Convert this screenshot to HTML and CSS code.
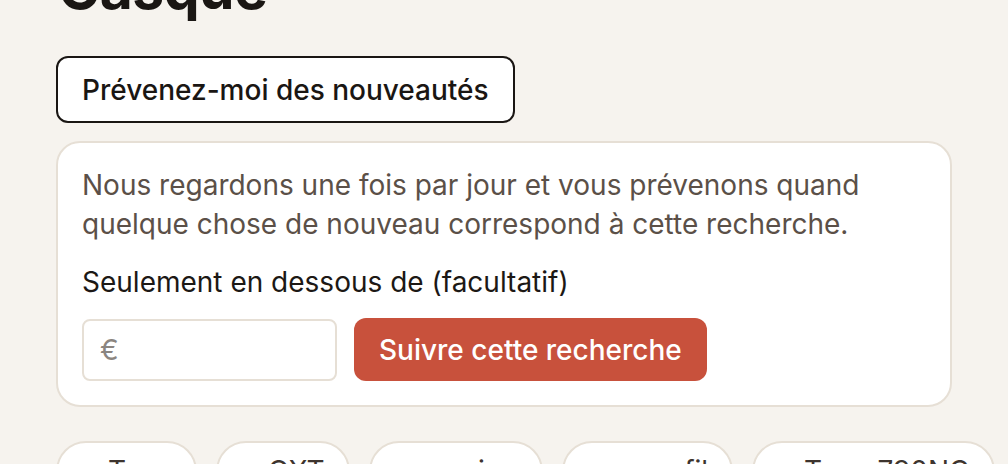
FILE: index.html
```html
<!DOCTYPE html>
<html lang="fr">
<head>
<meta charset="utf-8">
<title>Casque</title>
<link rel="stylesheet" href="styles.css">
</head>
<body>
<main class="page">
  <h1 class="title">Casque</h1>
  <button class="notify-btn" type="button">Prévenez-moi des nouveautés</button>
  <section class="card">
    <p class="card-text">Nous regardons une fois par jour et vous prévenons quand quelque chose de nouveau correspond à cette recherche.</p>
    <label class="card-label" for="price">Seulement en dessous de (facultatif)</label>
    <div class="card-row">
      <input class="price-input" id="price" type="text" placeholder="€">
      <button class="follow-btn" type="button">Suivre cette recherche</button>
    </div>
  </section>
  <nav class="chips">
    <a class="chip"><svg class="chip-icon" viewBox="0 0 24 24" width="14" height="14"><circle cx="10.5" cy="10.5" r="6.5" fill="none" stroke="currentColor" stroke-width="2.5"/><path d="M15.5 15.5 21 21" stroke="currentColor" stroke-width="2.5" stroke-linecap="round"/></svg><span>Tous</span></a>
    <a class="chip"><svg class="chip-icon" viewBox="0 0 24 24" width="14" height="14"><circle cx="10.5" cy="10.5" r="6.5" fill="none" stroke="currentColor" stroke-width="2.5"/><path d="M15.5 15.5 21 21" stroke="currentColor" stroke-width="2.5" stroke-linecap="round"/></svg><span>OXT</span></a>
    <a class="chip"><svg class="chip-icon" viewBox="0 0 24 24" width="14" height="14"><circle cx="10.5" cy="10.5" r="6.5" fill="none" stroke="currentColor" stroke-width="2.5"/><path d="M15.5 15.5 21 21" stroke="currentColor" stroke-width="2.5" stroke-linecap="round"/></svg><span>gaming</span></a>
    <a class="chip"><svg class="chip-icon" viewBox="0 0 24 24" width="14" height="14"><circle cx="10.5" cy="10.5" r="6.5" fill="none" stroke="currentColor" stroke-width="2.5"/><path d="M15.5 15.5 21 21" stroke="currentColor" stroke-width="2.5" stroke-linecap="round"/></svg><span>sans fil</span></a>
    <a class="chip"><svg class="chip-icon" viewBox="0 0 24 24" width="14" height="14"><circle cx="10.5" cy="10.5" r="6.5" fill="none" stroke="currentColor" stroke-width="2.5"/><path d="M15.5 15.5 21 21" stroke="currentColor" stroke-width="2.5" stroke-linecap="round"/></svg><span>Tune 790NC</span></a>
  </nav>
</main>
</body>
</html>
```

FILE: styles.css
```css
* { box-sizing: border-box; }
html, body { margin: 0; padding: 0; }
body {
  background: #f6f3ee;
  font-family: Inter, "Noto Sans", "Liberation Sans", sans-serif;
  color: #1c1815;
  overflow: hidden;
}
.page {
  padding: 0 56px;
  display: flex;
  flex-direction: column;
  align-items: flex-start;
}
.title {
  margin: -43px 0 0 2px;
  font-size: 57px;
  line-height: 64px;
  font-weight: 700;
  letter-spacing: -0.5px;
  color: #1a1613;
}
.notify-btn {
  margin-top: 35px;
  font: inherit;
  font-size: 28px;
  font-weight: 500;
  line-height: 36px;
  padding: 13.5px 24px;
  background: #fff;
  color: #1a1613;
  border: 2px solid #1a1613;
  border-radius: 12px;
}
.card {
  margin-top: 18px;
  align-self: stretch;
  background: #fff;
  border: 2px solid #e6dfd5;
  border-radius: 24px;
  padding: 23px 24px 24px 24px;
  display: flex;
  flex-direction: column;
  align-items: flex-start;
}
.card-text {
  margin: 0;
  font-size: 28px;
  line-height: 39px;
  color: #5b5048;
}
.card-label {
  margin-top: 19px;
  font-size: 28px;
  line-height: 39px;
  color: #1c1815;
}
.card-row {
  margin-top: 16px;
  display: flex;
  align-items: flex-end;
  gap: 17px;
}
.price-input {
  width: 255px;
  height: 62px;
  border: 2px solid #e6dfd5;
  border-radius: 8px;
  padding: 0 16px;
  font: inherit;
  font-size: 28px;
  color: #1c1815;
  background: #fff;
  outline: none;
}
.price-input::placeholder { color: #8b8580; }
.follow-btn {
  height: 63px;
  padding: 0 25px;
  background: #c8513c;
  color: #fff;
  border: none;
  border-radius: 12px;
  font: inherit;
  font-size: 28px;
  font-weight: 500;
}
.chips {
  margin-top: 34px;
  display: flex;
  gap: 19px;
}
.chip {
  display: flex;
  align-items: center;
  gap: 16px;
  height: 60px;
  padding: 0 23px 0 20px;
  background: #fff;
  border: 2px solid #e6dfd5;
  border-radius: 30px;
  font-size: 28px;
  color: #3d342e;
  white-space: nowrap;
}
.chip-icon { color: #8b8580; flex: none; }
```
